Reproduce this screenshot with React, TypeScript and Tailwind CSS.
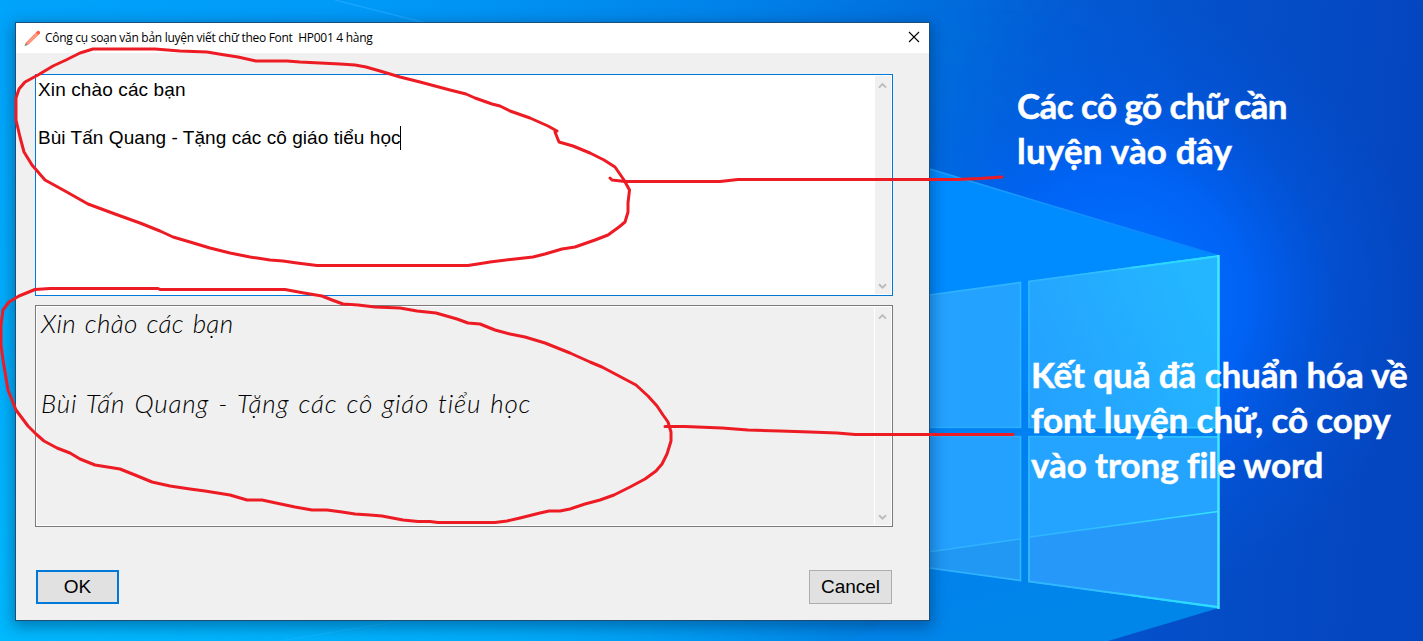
import React from "react";

const RED = "#ed1c24";

function Wallpaper() {
  return (
    <svg className="absolute inset-0" width="1423" height="641" viewBox="0 0 1423 641" aria-hidden="true">
      <defs>
        <linearGradient id="base" x1="0" y1="0" x2="1410" y2="140" gradientUnits="userSpaceOnUse">
          <stop offset="0" stopColor="#00a4fb" />
          <stop offset="0.3" stopColor="#0097f6" />
          <stop offset="0.5" stopColor="#0084ea" />
          <stop offset="0.65" stopColor="#006fde" />
          <stop offset="0.75" stopColor="#035bd4" />
          <stop offset="0.85" stopColor="#0450ca" />
          <stop offset="1" stopColor="#0446c0" />
        </linearGradient>
        <linearGradient id="floor" x1="0" y1="0" x2="0" y2="641" gradientUnits="userSpaceOnUse">
          <stop offset="0" stopColor="#00bfff" stopOpacity="0" />
          <stop offset="1" stopColor="#00bfff" stopOpacity="0.8" />
        </linearGradient>
        <linearGradient id="floorFade" x1="0" y1="0" x2="1130" y2="0" gradientUnits="userSpaceOnUse">
          <stop offset="0" stopColor="#fff" />
          <stop offset="0.45" stopColor="#fff" stopOpacity="0.75" />
          <stop offset="1" stopColor="#fff" stopOpacity="0" />
        </linearGradient>
        <mask id="floorMask"><rect width="1423" height="641" fill="url(#floorFade)" /></mask>
        <radialGradient id="glow" cx="1120" cy="300" r="300" gradientUnits="userSpaceOnUse">
          <stop offset="0.15" stopColor="#0070ff" />
          <stop offset="0.42" stopColor="#0066fc" stopOpacity="0.85" />
          <stop offset="0.7" stopColor="#005cec" stopOpacity="0.35" />
          <stop offset="1" stopColor="#0058e0" stopOpacity="0" />
        </radialGradient>
        <linearGradient id="beam" x1="929" y1="170" x2="1050" y2="641" gradientUnits="userSpaceOnUse">
          <stop offset="0" stopColor="#008cff" />
          <stop offset="0.3" stopColor="#008cff" />
          <stop offset="0.55" stopColor="#0080f2" />
          <stop offset="1" stopColor="#0086e8" />
        </linearGradient>
        <linearGradient id="pane" x1="1030" y1="430" x2="1220" y2="340" gradientUnits="userSpaceOnUse">
          <stop offset="0" stopColor="#249fff" />
          <stop offset="1" stopColor="#24b6ff" />
        </linearGradient>
        <linearGradient id="edge" x1="929" y1="0" x2="1219" y2="0" gradientUnits="userSpaceOnUse">
          <stop offset="0" stopColor="#2fb0ff" />
          <stop offset="0.5" stopColor="#30b8ff" />
          <stop offset="1" stopColor="#34e4ff" />
        </linearGradient>
        <linearGradient id="beamLine" x1="929" y1="0" x2="1219" y2="0" gradientUnits="userSpaceOnUse">
          <stop offset="0" stopColor="#1ba0ff" />
          <stop offset="1" stopColor="#0a80ff" />
        </linearGradient>
      </defs>
      <rect width="1423" height="641" fill="url(#base)" />
      <rect width="1423" height="641" fill="url(#floor)" mask="url(#floorMask)" />
      <rect width="1423" height="641" fill="url(#glow)" />
      <path d="M335 0L430 24" stroke="#16a5ff" strokeWidth="1.5" />
      <path d="M280 641L400 621" stroke="#20baff" strokeWidth="1" opacity="0.6" />
      <path d="M920 166L1219 255V608L1108 641H850L920 600Z" fill="url(#beam)" />
      <path d="M900 160L1208 253" stroke="url(#beamLine)" strokeWidth="1.5" />
      <path d="M900 299L1021 282V428H900Z" fill="#24a2ff" />
      <path d="M1028 281L1219 255V428H1028Z" fill="url(#pane)" />
      <path d="M900 436H1021V581L900 564Z" fill="#24a0ff" />
      <path d="M1028 436H1219V608L1028 582Z" fill="#24a4ff" />
      <path d="M900 556L1021 539V581L900 564Z" fill="#2098f4" />
      <path d="M1028 537L1219 511V608L1028 582Z" fill="#2598fa" />
      <g fill="none" stroke="url(#edge)" strokeWidth="1.6">
        <path d="M900 299L1020.500 282.500V427.500" />
        <path d="M1029 427V281.500L1218 256" />
        <path d="M900 556L1020 539M1030 537L1218 511.500" />
        <path d="M900 564L1020.500 580.500V437" />
        <path d="M1029 437V581.500L1218 607" strokeWidth="2" />
        <path d="M900 436.500H1021.100V436.600M1028 436.500L1218 437M900 427.500H1021.100V427.600M1028 427.500L1218 428" opacity="0.65" />
      </g>
      <path d="M1130 268L1218 256.500M1130 595L1218 607.500" stroke="#2adcff" strokeWidth="2" opacity="0.6" />
      <path d="M1218.500 255V609" stroke="#45e8ff" strokeWidth="2.5" />
    </svg>
  );
}

function Arrow({ down }: { down?: boolean }) {
  return (
    <svg width="9" height="7" viewBox="0 0 9 7" aria-hidden="true">
      <path d={down ? "M1 1.200L4.500 4.700L8 1.200" : "M1 5.600L4.500 2.100L8 5.600"} fill="none" stroke="#bcbcbc" strokeWidth="2" />
    </svg>
  );
}

function ScrollBar() {
  return (
    <div className="flex w-4 flex-none flex-col items-center justify-between bg-[#f0f0f0] pt-[6px] pb-[4px] pr-px">
      <Arrow />
      <Arrow down />
    </div>
  );
}

function Pencil() {
  return (
    <svg className="ml-[8px] flex-none" width="17" height="17" viewBox="0 0 17 17" aria-hidden="true">
      <path d="M2 12.500L12.400 2L15 4.400L4.600 14.600L1.600 15.300Z" fill="#ff8a70" />
      <path d="M3.800 13.200L13.500 3.800" stroke="#ffad98" strokeWidth="1" />
      <path d="M12 2.400L13.600.8Q15.800.2 16 2.200L15.900 3.400L14.600 4.800Z" fill="#ff5f42" />
      <path d="M.4 16L1.800 12.900L3.900 14.900Z" fill="#7c8084" />
    </svg>
  );
}

function Markup() {
  return (
    <svg className="pointer-events-none absolute inset-0" width="1423" height="641" viewBox="0 0 1423 641" aria-hidden="true">
      <g fill="none" stroke={RED} strokeWidth="3" strokeLinecap="round" strokeLinejoin="round">
        <path d="M557 131L548 126L530 118L510 111L500 106L492 104L475 98L466 94L450 90L420 82L400 77L380 71L366 67L355 65L340 64L300 62L287 61H256L238 57L225 55L207 52L180 51L155 49H93L80 53L66 60L53 66L38 75L25 82L19 89L16 98V120L20 137L24 152L32 165L45 180L65 191L88 204L115 214L140 223L160 231L173 237L190 242L210 248L230 253L250 257L270 260L283 261L297 263L317 265.500H468L484 263L490 262L515 259L533 257L545 254L562 249L575 247L595 240L608 235L619 227L625 222L628 212V203L629.500 190L624 180L615 167L604 160L590 153L573 146L559 142L555 132" />
        <path d="M35 289.500L50 288.500H158L160 289.500H285L304 293L322 296L332 300L343 304L358 305L375 307L400 308L417 311L436 313L457 319L468 323L480 324L495 330L510 334L525 337L545 343L570 353L590 362L602 367L619 376L636 385L648 396L657 406L663 415L668 422L671 432V441L667 454L662 464L656 471L645 479L630 487L614 495L600 500L585 504L570 509L560 511H549L540 513L532 515L520 518L507 521L495 522.500H438L430 521.500H418L403 520L382 516L370 515L355 514L342 512L327 510H312L295 507L276 503L262 500H247L230 495L205 491L190 489L170 486L152 482L135 475L120 469L95 465L80 459L70 453L57 448L44 441L36 434L28 426L16 410L8 390L3 360L1 345L1 325L3 310L9 302L19 296Z" />
        <path d="M610 178L612 180L625 181.500H720L738 179.500H957L980 178.500L1002 177" />
        <path d="M665 426.500H685L722 428L748 430L780 431L810 432L837 433L855 434.500H1013" />
      </g>
    </svg>
  );
}

export default function App() {
  return (
    <main className="relative h-[641px] w-[1423px] overflow-hidden">
      <Wallpaper />
      <div className="relative flex h-full items-start">
        <section className="mt-[22px] ml-[15px] flex h-[599px] w-[915px] flex-none flex-col border border-[#1c4f78] bg-[#f0f0f0] shadow-[0_4px_14px_2px_rgba(0,30,70,0.4)]">
          <header className="flex h-[30px] flex-none items-center bg-white pr-[9px]">
            <Pencil />
            <h1 className="ml-[4px] flex-1 whitespace-pre font-['Open_Sans','Noto_Sans',sans-serif] text-[12px] leading-[16px] tracking-[-0.285px] text-black">{"Công cụ soạn văn bản luyện viết chữ theo Font  HP001 4 hàng"}</h1>
            <svg className="-mt-[2px]" width="12" height="12" viewBox="0 0 12 12" aria-hidden="true">
              <path d="M1 1L11 11M11 1L1 11" stroke="#000" strokeWidth="1.1" />
            </svg>
          </header>
          <div className="flex flex-1 flex-col px-[19px] pt-[21px]">
            <div className="flex h-[222px] w-[858px] border border-[#0078d7] bg-white p-px">
              <div className="flex-1 whitespace-pre pt-[2px] pl-px font-['Liberation_Sans',Arial,sans-serif] text-[19px] leading-[24px] tracking-[0.05px] text-black">
                <p className="tracking-[0.12px]">Xin chào các bạn</p>
                <p>&nbsp;</p>
                <p className="flex"><span>Bùi Tấn Quang - Tặng các cô giáo tiểu học</span><i className="-ml-px h-[24px] w-px bg-black" /></p>
              </div>
              <ScrollBar />
            </div>
            <div className="mt-[9px] flex h-[222px] w-[858px] border border-[#7a7a7a] bg-white p-px">
              <div className="mr-px flex-1 whitespace-pre bg-[#f0f0f0] pl-[4px] font-['Lato',sans-serif] text-[26px] font-light leading-[40px] tracking-[0.75px] text-black italic [font-variant-ligatures:none] [word-spacing:2px]">
                <p className="-mt-[4px] tracking-[0.3px]">Xin chào các bạn</p>
                <p>&nbsp;</p>
                <p>Bùi Tấn Quang - Tặng các cô giáo tiểu học</p>
              </div>
              <ScrollBar />
            </div>
            <div className="mt-[43px] flex justify-between pr-px pl-px font-['Liberation_Sans',Arial,sans-serif] text-[19px] text-black">
              <button className="h-[34px] w-[83px] border-2 border-[#0078d7] bg-[#e1e1e1]">OK</button>
              <button className="mr-[17px] h-[34px] w-[83px] border border-[#adadad] bg-[#e1e1e1]">Cancel</button>
            </div>
          </div>
        </section>
        <aside className="flex flex-col whitespace-pre font-['Lato','Open_Sans',sans-serif] text-[35px] font-bold leading-[45px] text-white [font-variant-ligatures:none] [-webkit-text-stroke:0.5px_white]">
          <div className="mt-[83px] ml-[87px]">
            <p className="tracking-[-0.58px]">Các cô gõ chữ cần</p>
            <p className="tracking-[0.2px]">luyện vào đây</p>
          </div>
          <div className="mt-[179px] ml-[101px]">
            <p className="tracking-[-0.1px]">Kết quả đã chuẩn hóa về</p>
            <p className="tracking-[-0.08px]">font luyện chữ, cô copy</p>
            <p className="tracking-[-0.08px]">vào trong file word</p>
          </div>
        </aside>
      </div>
      <Markup />
    </main>
  );
}
